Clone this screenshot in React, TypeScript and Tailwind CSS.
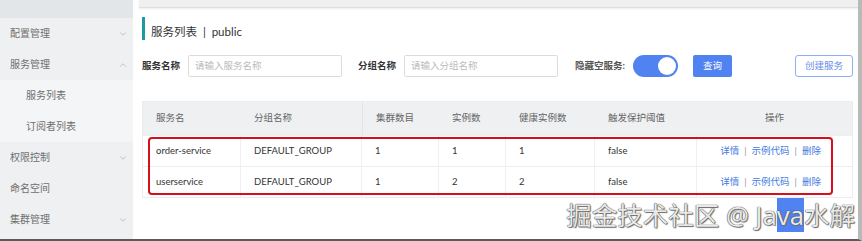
import { ChevronDown, ChevronUp } from "lucide-react";

const font = "font-['Lato','Noto_Sans_CJK_SC',sans-serif]";

const menu = [
  { label: "配置管理", icon: "down" },
  { label: "服务管理", icon: "up" },
  { label: "服务列表", sub: true },
  { label: "订阅者列表", sub: true },
  { label: "权限控制", icon: "down" },
  { label: "命名空间" },
  { label: "集群管理", icon: "down" },
];

const cols = [
  { title: "服务名", w: "w-[98px]" },
  { title: "分组名称", w: "w-[121px]" },
  { title: "集群数目", w: "w-[77px]" },
  { title: "实例数", w: "w-[67px]" },
  { title: "健康实例数", w: "w-[89px]" },
  { title: "触发保护阈值", w: "w-[102px]" },
];

const rows = [
  ["order-service", "DEFAULT_GROUP", "1", "1", "1", "false"],
  ["userservice", "DEFAULT_GROUP", "1", "2", "2", "false"],
];

export default function App() {
  return (
    <div className={`${font} w-[862px] h-[241px] overflow-hidden relative bg-white flex border-b-2 border-[#5a5a5a] border-r-[4px] border-r-[#b9b9b9]`}>
      {/* sidebar */}
      <aside className="w-[133px] shrink-0 bg-[#eef0f1] flex flex-col">
        <div className="h-[18px] bg-[#e3e6e8]" />
        {menu.map((m) => (
          <div
            key={m.label}
            className={`h-[31px] shrink-0 flex items-center justify-between text-[10px] text-[#6f6f6f] ${
              m.sub ? "pl-[26px] bg-[#f4f5f6]" : "pl-[10px]"
            } pr-[5px]`}
          >
            <span>{m.label}</span>
            {m.icon === "down" && <ChevronDown size={10} strokeWidth={1.3} className="text-[#999]" />}
            {m.icon === "up" && <ChevronUp size={10} strokeWidth={1.3} className="text-[#999]" />}
          </div>
        ))}
      </aside>

      {/* main */}
      <main className="flex-1 flex flex-col pl-[9px] pr-[2px]">
        <div className="h-[8px] mx-[-3px] bg-[#f0f0f0] border-b border-[#dedede] shadow-[0_1px_2px_rgba(0,0,0,0.08)]" />

        <div className="mt-[9px] flex items-end pb-[2px] h-[23px] border-l-[3px] border-[#1c9aa1] pl-[6px] text-[11.5px] leading-[13px] text-[#333]">
          服务列表&nbsp;&nbsp;|&nbsp;&nbsp;public
        </div>

        {/* filters */}
        <div className="mt-[15px] flex items-center h-[22px] text-[9.5px] pr-[3px]">
          <span className="font-bold text-[#333] w-[46px]">服务名称</span>
          <div className="w-[154px] h-[22px] border border-[#dcdcdc] rounded-[2px] flex items-center px-[6px] text-[#bbb]">
            请输入服务名称
          </div>
          <span className="font-bold text-[#333] ml-[16px] w-[46px]">分组名称</span>
          <div className="w-[154px] h-[22px] border border-[#dcdcdc] rounded-[2px] flex items-center px-[6px] text-[#bbb]">
            请输入分组名称
          </div>
          <span className="font-bold text-[#555] ml-[17px]">隐藏空服务:</span>
          <div className="ml-[8px] w-[45px] h-[22px] rounded-full bg-[#5082f2] flex items-center justify-end pr-[2px]">
            <div className="w-[18px] h-[18px] rounded-full bg-white" />
          </div>
          <div className="ml-[15px] w-[39px] h-[22px] rounded-[2px] bg-[#5082f2] text-white flex items-center justify-center">
            查询
          </div>
          <div className="ml-auto w-[58px] h-[22px] rounded-[3px] border border-[#8eaef5] text-[#6b8fe6] flex items-center justify-center">
            创建服务
          </div>
        </div>

        {/* table */}
        <div className="mt-[24px] w-[711px] border border-[#ececec] text-[9.5px] relative">
          <div className="flex h-[33px] bg-[#eef0f2] text-[#666]">
            {cols.map((c, i) => (
              <div
                key={c.title}
                className={`${c.w} flex items-center pl-[13px] ${i === 2 ? "border-l border-[#e2e4e6]" : ""}`}
              >
                {c.title}
              </div>
            ))}
            <div className="flex-1 flex items-center justify-center">操作</div>
          </div>
          {rows.map((r, ri) => (
            <div key={ri} className="flex h-[31px] border-t border-[#eeeeee] text-[#333]">
              {r.map((v, i) => (
                <div
                  key={i}
                  className={`${cols[i].w} flex items-center pl-[13px] border-r border-[#f0f0f0]`}
                >
                  {v}
                </div>
              ))}
              <div className="flex-1 flex items-center justify-end pr-[31px] text-[#3f7be0]">
                详情<span className="mx-[5px] text-[#999]">|</span>示例代码
                <span className="mx-[5px] text-[#999]">|</span>删除
              </div>
            </div>
          ))}
          <div className="absolute left-[5px] top-[35px] w-[685px] h-[58px] border-2 border-[#d4101e] rounded-[4px]" />
        </div>

        <div className="flex-1" />
      </main>

      {/* watermark */}
      <div className="absolute right-[3px] top-[199px] text-[25.5px] leading-[32px] font-['Noto_Sans','Noto_Sans_CJK_SC',sans-serif] text-[#e9e9e9] [text-shadow:0_0_1px_#444,0_0_1px_#444,1px_1px_1px_#777] whitespace-nowrap">
        掘金技术社区 @ Ja<span className="bg-[#5082f2]">va</span>水解
      </div>
    </div>
  );
}
